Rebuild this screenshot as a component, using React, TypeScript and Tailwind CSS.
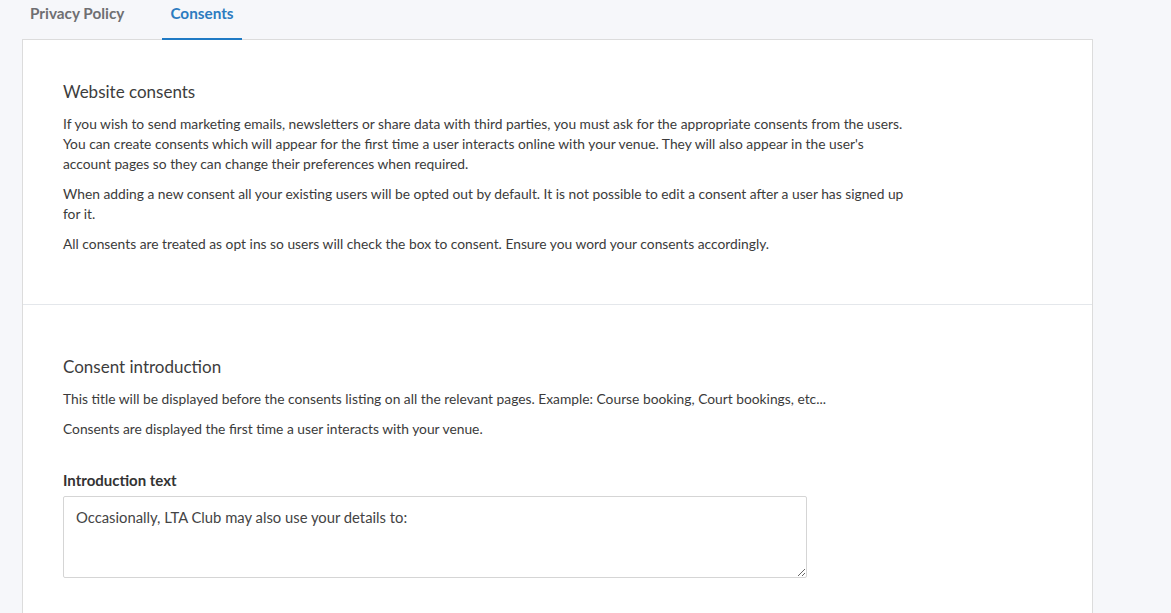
export default function App() {
  return (
    <div className="min-h-[613px] bg-[#f6f7fa] font-['Lato','Open_Sans',sans-serif] text-[#3b3b3b]">
      <div className="ml-[22px] w-[1071px]">
        {/* tabs */}
        <div className="flex h-[39px] items-stretch">
          <button className="-mb-px self-start px-[8px] pt-[2px] text-[15.3px] font-bold text-[#6f6f72]">
            Privacy Policy
          </button>
          <button className="relative z-10 -mb-px ml-[30px] flex items-start border-b-2 border-[#1f7ac4] px-[8px] pt-[2px] text-[15.3px] font-bold text-[#2c7cc0]">
            Consents
          </button>
        </div>

        <div className="border border-[#dcdcdc] bg-white">
          <section className="border-b border-[#e4e7eb] px-[40px] pt-[40px] pb-[40px]">
            <h2 className="text-[17px] leading-[24px] text-[#3d3d3d]">Website consents</h2>
            <div className="mt-[10px] max-w-[850px] text-[13.8px] leading-[20px]">
              <p className="mb-[10px]">
                If you wish to send marketing emails, newsletters or share data with third parties, you must ask for the appropriate consents from the users. You can create consents which will appear for the first time a user interacts online with your venue. They will also appear in the user's account pages so they can change their preferences when required.
              </p>
              <p className="mb-[10px]">
                When adding a new consent all your existing users will be opted out by default. It is not possible to edit a consent after a user has signed up for it.
              </p>
              <p className="mb-[10px]">
                All consents are treated as opt ins so users will check the box to consent. Ensure you word your consents accordingly.
              </p>
            </div>
          </section>

          <section className="px-[40px] pt-[50px] pb-[40px]">
            <h2 className="text-[17px] leading-[24px] text-[#3d3d3d]">Consent introduction</h2>
            <div className="mt-[10px] text-[13.8px] leading-[20px]">
              <p className="mb-[10px]">
                This title will be displayed before the consents listing on all the relevant pages. Example: Course booking, Court bookings, etc...
              </p>
              <p>Consents are displayed the first time a user interacts with your venue.</p>
            </div>
            <label className="mt-[31px] block text-[15px] font-bold leading-[20px] text-[#333]">
              Introduction text
            </label>
            <textarea
              className="mt-[6px] block h-[82px] w-[744px] rounded-[2px] border border-[#d5d5d5] px-[12px] py-[10px] text-[14.8px] leading-[20px] text-[#444] outline-none"
              defaultValue="Occasionally, LTA Club may also use your details to:"
            />
          </section>
        </div>
      </div>
    </div>
  );
}
